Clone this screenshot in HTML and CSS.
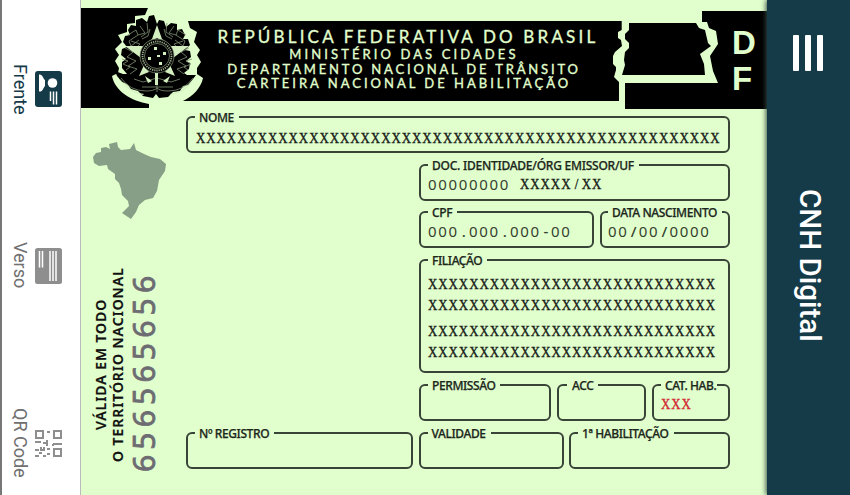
FILE: index.html
```html
<!DOCTYPE html>
<html lang="pt-BR">
<head>
<meta charset="utf-8">
<title>CNH Digital</title>
<link rel="stylesheet" href="styles.css">
</head>
<body>
<nav class="tabs">
  <a class="tab tab-front"><span class="tab-label">Frente</span>
    <svg class="tab-icon" width="27" height="36" viewBox="0 0 27 36"><rect width="27" height="36" rx="3" fill="#153a48"/><path d="M4 3.500C8 3 8 8 10 9V15C8 17 8 21 4 20.500Z" fill="#fff"/><circle cx="17.500" cy="12" r="4.800" fill="#fff"/><path d="M15.500 20.500V30M18.500 20.500V33.500M21.500 20.500V33.500" stroke="#fff" stroke-width="1.500"/></svg></a>
  <a class="tab tab-back"><span class="tab-label">Verso</span>
    <svg class="tab-icon" width="27" height="36" viewBox="0 0 27 36"><rect width="27" height="36" rx="2.500" fill="#8e8e8e"/><path d="M4.500 3V19.500M7.500 3V19.500M15 3V33M18 3V33M21 3V33" stroke="#fff" stroke-width="1.500"/></svg></a>
  <a class="tab tab-qr"><span class="tab-label">QR Code</span>
    <svg class="tab-icon" width="27" height="27" viewBox="0 0 27 27"><g fill="none" stroke="#8e8e8e" stroke-width="2"><path d="M1 1h7v7H1zM19 1h7v7h-7zM19 19h7v7h-7z"/><path d="M12 2h3M0 12h6M8 13h5M12 10v6M18 14h9M0 20h4M6 17v3h3M9 17v4M12 19h3M4 23h3M0 26h4M8 26h3M12 24h3M18 14v2"/></g></svg></a>
</nav>
<main class="card">
  <header class="banner">
    <svg class="banner-art" width="686" height="110" viewBox="81 0 686 110">
      <path d="M81 8H148L145 15L135 16V23L127 24V32L118 35L122 42L115 49L119 55L115 61L119 68L118 73L112 76C115 91 131 101 149 104V108H81Z"/>
      <path d="M188 21H621.700V30L618 32V38L621 40L622 46L615 52L613 56V64L616 67V70L614 77L619 82V101H183C193 96 201 88 203 78L197 74V68L201 62L197 55L200 50L194 42L197 32L190 28Z"/>
      <path d="M629 23H696L699 28L705 30L708 43L711 46L700 54L704 64L705 75H622L625 65L624 60L625 52L629 48V43L625 39V34L629 30Z"/>
      <path d="M702 11H767V109H625V83H718L713 71L710 56L718 44L716 31L709 28L707 22H702Z"/>
      <path class="wreath" d="M157 24l2-4 5 1 2 6 5-4 6 1 0 6 5-1 3 6-2 4 5 0 2 6-5 5 5 1 1 6-5 4 4 2-1 6-5 4 3 2 9 0-3 4 -5 6-5 1-3 5-7 1-5 5-9 1-3-4-3 4-10-2-5-5-7-2-4-5-5-2-5-6-2-5 8 3 4 0-5-6 0-6 4-3-5-4 1-6 5-2-4-5 2-6 5-1-2-5 3-5 5 1 0-6 6-2 5 4 2-6 5-1z"/>
      <g class="leaves">
        <path d="M128 35l8-5 2 5-9 6 2 5 8-6M125 48l8 4-6 5 9 4-8 5 9 3-7 5M131 41l9 3-5 5M140 26l5 7-7 2M147 23l1 9-7 5M150 29l-2 7-6 3"/>
        <path d="M186 35l-8-5-2 5 9 6-2 5-8-6M189 48l-8 4 6 5-9 4 8 5-9 3 7 5M183 41l-9 3 5 5M174 26l-5 7 7 2M167 23l-1 9 7 5M164 29l2 7 6 3"/>
        <path d="M122 59l6 2-5 3 7 3-4 3M192 59l-6 2 5 3-7 3 4 3M121 78q9 13 25 13 8 0 11-3 3 3 11 3 16 0 25-13M134 79l9 3 14-4 14 4 9-3M142 87h31M157 78v14"/>
      </g>
      <path class="light" d="M157 25l5 14 7 5-12-6-12 6 7-5zM189 46l-16 12 0-6-5-6zM125 46l16 12 0-6 5-6zM175 76l-10-4 5-7zM139 76l10-4-5-7z"/>
      <circle cx="157" cy="56" r="17"/>
      <circle class="ring" cx="157" cy="56" r="14.500"/>
      <path class="line" d="M144.500 56a12.500 12.500 0 0 0 25 0a12.500 12.500 0 0 0-25 0M140 56a17 17 0 0 0 34 0a17 17 0 0 0-34 0"/>
      <path class="light" d="M154 47h3v3h-3zM163 52h3v3h-3zM148 57h3v3h-3zM157 55h3v2h-3zM159 62h3v3h-3zM155 73h3v12h-3zM145 76l7 5-4 2zM170 76l-7 5 4 2z"/>
      <path class="light" d="M120 79c7 9 14 13 24 15l-1 1c-10-2-18-7-23-16M194 79c-7 9-14 13-24 15l1 1c10-2 18-7 23-16"/>
    </svg>
    <div class="titles">
      <p class="t1">REPÚBLICA FEDERATIVA DO BRASIL</p>
      <p class="t2">MINISTÉRIO DAS CIDADES</p>
      <p class="t3">DEPARTAMENTO NACIONAL DE TRÂNSITO</p>
      <p class="t4">CARTEIRA NACIONAL DE HABILITAÇÃO</p>
    </div>
    <div class="state"><span>D</span><span>F</span></div>
  </header>
  <div class="body">
    <aside class="side">
      <svg class="map" width="76" height="77" viewBox="0 0 76 77"><path fill="#869f86" d="M26 0l1 5 3 3 9-1 4-6 2 7 8 4 7 3 9 2 6 5-1 7-6 9-2 11-4 7-8 2-6 5-3 7-5 7-9-6 7-7-1-5-6-6-1-6-2-6-4-4v-5l-7-5-1-4-8 1-5-3-1-6 3-4 5-1V6l5-1 4 2-1-5z"/></svg>
      <div class="side-text"><p class="valid">VÁLIDA EM TODO<br>O TERRITÓRIO NACIONAL</p><p class="serial">656565656</p></div>
    </aside>
    <div class="fields">
      <fieldset class="f-nome"><legend class="l-nome">NOME</legend><p class="value x">XXXXXXXXXXXXXXXXXXXXXXXXXXXXXXXXXXXXXXXXXXXXXXXXXXX</p></fieldset>
      <fieldset class="f-doc"><legend class="l-doc">DOC. IDENTIDADE/ÓRG EMISSOR/UF</legend><p class="value pair"><span>00000000</span> <span class="x">XXXXX<b>/</b>XX</span></p></fieldset>
      <div class="row r-cpf">
        <fieldset class="f-cpf"><legend class="l-cpf">CPF</legend><p class="value">000<b>.</b>000<b>.</b>000<b>-</b>00</p></fieldset>
        <fieldset class="f-data"><legend class="l-data">DATA NASCIMENTO</legend><p class="value">00<b>/</b>00<b>/</b>0000</p></fieldset>
      </div>
      <fieldset class="f-fil"><legend class="l-fil">FILIAÇÃO</legend><p class="value x">XXXXXXXXXXXXXXXXXXXXXXXXXXXX<br>XXXXXXXXXXXXXXXXXXXXXXXXXXXX</p><p class="value x second">XXXXXXXXXXXXXXXXXXXXXXXXXXXX<br>XXXXXXXXXXXXXXXXXXXXXXXXXXXX</p></fieldset>
      <div class="row r-perm">
        <fieldset class="f-perm"><legend class="l-perm">PERMISSÃO</legend></fieldset>
        <fieldset class="f-acc"><legend class="l-acc">ACC</legend></fieldset>
        <fieldset class="f-cat"><legend class="l-cat">CAT. HAB.</legend><p class="value x red">XXX</p></fieldset>
      </div>
      <div class="row r-reg">
        <fieldset class="f-reg"><legend class="l-reg">Nº REGISTRO</legend></fieldset>
        <fieldset class="f-val"><legend class="l-val">VALIDADE</legend></fieldset>
        <fieldset class="f-hab"><legend class="l-hab">1ª HABILITAÇÃO</legend></fieldset>
      </div>
    </div>
  </div>
</main>
<header class="appbar"><span class="menu"><i></i><i></i><i></i></span><h1>CNH Digital</h1></header>
</body>
</html>
```

FILE: styles.css
```css
* { box-sizing: border-box; }
body { margin: 0; width: 850px; height: 495px; display: flex; overflow: hidden; background: #e1ffcd; color: #182018; font-family: "Noto Sans", sans-serif; }
p, h1, fieldset, legend { margin: 0; padding: 0; font-weight: normal; }
.tabs { width: 81px; height: 495px; border-left: 2px solid #777; border-right: 1px solid #bbb; background: #fff; display: grid; grid-template-rows: 165px 167px 163px; }
.tab { display: flex; align-items: flex-start; font: 18px/24px Roboto, sans-serif; color: #707070; }
.tab-label { writing-mode: vertical-rl; width: 24px; margin-left: 6px; white-space: nowrap; }
.tab-icon { margin-left: 3px; flex: none; }
.tab-front { color: #153a48; padding-top: 64px; }
.tab-front .tab-icon { margin-top: 7px; }
.tab-back { padding-top: 77px; }
.tab-back .tab-icon { margin-top: 6px; }
.tab-qr { padding-top: 76px; }
.tab-qr .tab-icon { margin-top: 22px; }

.card { width: 686px; height: 495px; }
.banner { position: relative; height: 111px; display: flex; color: #e1ffcd; }
.banner-art { position: absolute; left: 0; top: 0; }
.leaves { fill: none; stroke: #7f8f72; stroke-width: .8; }
.light { fill: #d3efbf; }
.ring { fill: none; stroke: #a0b291; stroke-width: 1.800; stroke-dasharray: 1.200 1; }
.line { fill: none; stroke: #8d9e80; stroke-width: .7; }
.titles { position: relative; width: 400px; margin: 27px 0 0 127px; text-align: center; white-space: nowrap; font: bold 13px/15px Lato, sans-serif; -webkit-text-stroke: .35px #e1ffcd; }
.t1 { font-size: 17px; line-height: 20px; letter-spacing: 3.200px; }
.t2, .t3, .t4 { line-height: 14.500px; padding-right: 8px; }
.t2 { letter-spacing: 3.100px; }
.t3 { letter-spacing: 2.830px; }
.t4 { letter-spacing: 3px; }
.state { position: relative; margin: 25px 0 0 124px; display: flex; flex-direction: column; font: bold 33px/36px "Liberation Sans", sans-serif; }

.body { display: flex; height: 384px; }
.side { width: 105px; display: flex; flex-direction: column; padding-top: 31px; }
.map { margin-left: 10px; flex: none; }
.side-text { display: flex; margin: 41px 0 0 12px; height: 212px; }
.valid, .serial { writing-mode: vertical-rl; transform: rotate(180deg); white-space: nowrap; }
.valid { width: 34px; text-align: center; font-size: 14px; line-height: 16.500px; font-weight: 600; letter-spacing: .95px; color: #111; margin-top: -2px; margin-bottom: 1px; -webkit-text-stroke: .2px #111; }
.serial { width: 28px; margin-left: 3px; font-size: 30px; line-height: 28px; letter-spacing: 5.200px; color: #6d6c72; -webkit-text-stroke: .8px #6d6c72; margin-top: 2px; }

.fields { width: 544px; display: grid; grid-template-rows: 48px 47px 48px 125px 48px 42px; justify-items: end; align-content: start; }
fieldset { height: 42px; min-width: 0; border: 2px solid #384437; border-radius: 6px; padding-left: 7px; }
.row { display: flex; justify-content: space-between; }
legend { height: 12px; line-height: 14px; font-size: 12px; font-weight: 500; letter-spacing: -.4px; padding: 0 5px 0 4px; white-space: nowrap; color: #1d271c; -webkit-text-stroke: .25px #1d271c; }
.l-doc { letter-spacing: -.25px; }
.l-acc { padding-left: 5px; margin-left: 1px; }
.l-cat { padding-right: 1px; }
.f-nome, .r-reg { width: 544px; }
.f-doc, .r-cpf, .f-fil, .r-perm { width: 311px; }
.f-cpf { width: 175px; }
.f-data { width: 130px; padding-left: 6px; }
.f-fil { height: 119px; }
.f-perm { width: 132px; }
.f-acc { width: 89px; }
.f-cat { width: 78px; }
.f-reg { width: 227px; }
.f-val { width: 145px; }
.f-hab { width: 161px; }
.value { font-size: 15px; line-height: 20px; letter-spacing: 1.670px; white-space: nowrap; margin-top: 3px; color: #36412f; }
.value b { display: inline-block; width: 10.250px; text-align: center; letter-spacing: 0; font-weight: 500; }
.x { font-family: "Liberation Serif", serif; font-size: 15.500px; letter-spacing: 1.200px; transform: scaleX(.83); transform-origin: 0 50%; color: #182018; -webkit-text-stroke: .4px; }
.value .x b { width: 12.350px; font-weight: normal; }
.pair { display: flex; gap: 10px; }
.f-nome .value { margin-top: 5px; margin-left: 1px; }
.f-fil .value { line-height: 21px; margin-top: 7px; }
.f-fil .second { margin-top: 5px; }
.value.red { color: #d22630; margin-top: 3px; }

.appbar { width: 83px; height: 495px; background: #153a48; color: #fff; box-shadow: -1px 0 5px #344c44; z-index: 1; }
.menu { display: flex; gap: 6px; margin: 35px 0 0 26px; height: 36px; }
.menu i { width: 6px; background: #fff; border-radius: 1px; }
h1 { writing-mode: vertical-rl; margin: 118px 0 0 25px; width: 36px; font: 500 29.500px/36px Roboto, sans-serif; white-space: nowrap; }
```
